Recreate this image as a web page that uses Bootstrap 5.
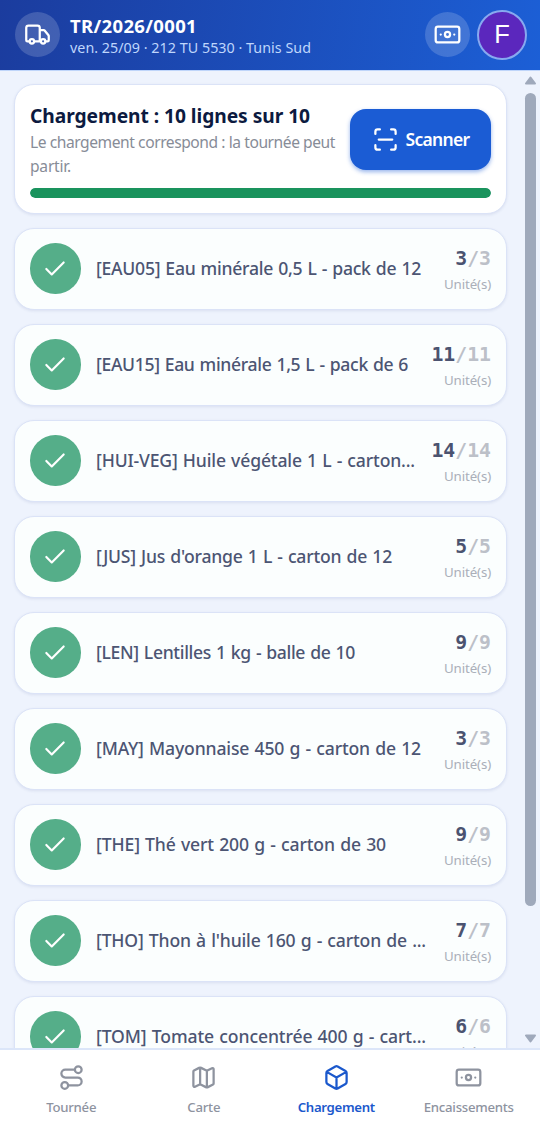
<!DOCTYPE html>
<html lang="fr">
<head>
<meta charset="utf-8">
<meta name="viewport" content="width=device-width, initial-scale=1">
<title>Chargement</title>
<link href="https://cdn.jsdelivr.net/npm/bootstrap@5.3.0/dist/css/bootstrap.min.css" rel="stylesheet">
<style>
body{font-family:"Noto Sans","Open Sans",sans-serif;background:#eef3fd;height:1130px;overflow:hidden;color:#0c1a40}
svg{display:block;fill:none;stroke:currentColor;stroke-width:2;stroke-linecap:round;stroke-linejoin:round}
.topbar{height:71px;padding:0 13px 1px 15px;background:linear-gradient(100deg,#1b3c9e,#1c5fd6);border-bottom:1px solid #bfd5fa}
.round-btn{width:45px;height:45px;background:rgba(255,255,255,.17)}
.avatar{width:50px;height:50px;background:#5b27bd;border:2px solid #87a9f0;font:25.5px "Liberation Sans",sans-serif;margin-left:7px}
.tour-block{margin-left:10px}
.tour-title{font-size:18.5px;font-weight:700;line-height:24px;margin-top:1px}
.tour-sub{font-size:14.3px;line-height:19px;color:#bfd6fc}
.content-col{padding:13px 0 0 14px;width:507px;gap:14px}
.panel{background:#fff;border:1px solid #dbe3f7;border-radius:20px;box-shadow:0 1px 3px rgba(40,60,130,.1);flex:none}
.summary{height:130px;padding:15px 15px 15px}
.sum-title{font-size:19.2px;font-weight:700;line-height:28px;color:#0c1a40;margin-top:2px}
.sum-text{font-size:15.6px;line-height:24px;color:#878c97}
.scan-btn{width:141px;height:61px;border-radius:16px;background:#1b5cd4;color:#fff;font-size:17.5px;font-weight:600;box-shadow:0 2px 4px rgba(27,92,212,.45);gap:7px;margin-top:9px}
.load-bar{height:10px;border-radius:5px;background:#e4eaf5;margin-top:auto;--bs-progress-bar-bg:#1a935d}
.load-bar .progress-bar{border-radius:5px}
.line-item{height:82px;padding:0 15px 1px;background:#fbfefe}
.tick{width:50.5px;height:50.5px;background:#55ae89;color:#fff;flex:none}
.item-name{font-size:17.6px;font-weight:500;line-height:26px;color:#4c5573;margin:-2px 0 0 15.5px;word-spacing:.8px;flex:1;min-width:0}
.qty{font-family:"DejaVu Sans Mono",monospace;font-size:19.8px;font-weight:700;line-height:25px;color:#4b5370;margin-top:3px}
.qty span{color:#bcc0c8}
.unit{font-size:13.3px;line-height:22px;color:#aaafb9;margin-top:2px}
.scroll-col{width:11px;margin-left:18px;padding:5px 0;color:#9fa9bb}
.thumb{height:813px;border-radius:6px;background:#9fa9bb;margin-top:8px}
.tabs{height:82px;background:#fff;border-top:2px solid #dce6f9;padding:0 5px}
.tab-item{color:#8e939f;font-size:13.2px;font-weight:500;line-height:18px;padding-top:13.5px;gap:7px;white-space:nowrap}
.tab-item.current{color:#1b58cc;font-weight:600}
</style>
</head>
<body class="d-flex flex-column">
<svg class="d-none"><defs>
<symbol id="cash" viewBox="0 0 24 24"><rect x="1.500" y="5" width="21" height="14" rx="2"/><circle cx="12" cy="12" r="2.300"/><path d="M6 12h.01M18 12h.01"/></symbol>
<symbol id="check" viewBox="0 0 24 24"><path d="M20 6 9 17l-5-5"/></symbol>
</defs></svg>
<header class="topbar d-flex align-items-center text-white flex-shrink-0">
<div class="round-btn rounded-circle d-flex align-items-center justify-content-center"><svg width="27" height="27" viewBox="0 0 24 24"><path d="M14 18V6a2 2 0 0 0-2-2H4a2 2 0 0 0-2 2v11a1 1 0 0 0 1 1h2M15 18H9M19 18h2a1 1 0 0 0 1-1v-3.650a1 1 0 0 0-.22-.624l-3.480-4.350A1 1 0 0 0 17.520 8H14"/><circle cx="7" cy="18" r="2"/><circle cx="17" cy="18" r="2"/></svg></div>
<div class="tour-block flex-grow-1"><div class="tour-title"><span class="fit" data-w="127">TR/2026/0001</span></div><div class="tour-sub"><span class="fit" data-w="241">ven. 25/09 · 212 TU 5530 · Tunis Sud</span></div></div>
<div class="round-btn rounded-circle d-flex align-items-center justify-content-center"><svg width="27" height="27"><use href="#cash"/></svg></div>
<div class="avatar rounded-circle d-flex align-items-center justify-content-center">F</div>
</header>
<main class="d-flex flex-grow-1 overflow-hidden">
<div class="content-col d-flex flex-column" id="lines">
<section class="panel summary d-flex flex-column">
<div class="d-flex justify-content-between">
<div><div class="sum-title"><span class="fit" data-w="280">Chargement : 10 lignes sur 10</span></div><div class="sum-text"><span class="fit" data-w="305">Le chargement correspond : la tournée peut</span><br><span class="fit" data-w="41">partir.</span></div></div>
<button class="scan-btn btn border-0 p-0 d-flex align-items-center justify-content-center flex-shrink-0"><svg width="27" height="27" viewBox="0 0 24 24"><path d="M3 7V5a2 2 0 0 1 2-2h2M17 3h2a2 2 0 0 1 2 2v2M21 17v2a2 2 0 0 1-2 2h-2M7 21H5a2 2 0 0 1-2-2v-2M6 12h12"/></svg><span class="fit" data-w="64">Scanner</span></button>
</div>
<div class="progress load-bar"><div class="progress-bar w-100"></div></div>
</section>
</div>
<div class="scroll-col d-flex flex-column">
<svg width="11" height="9" viewBox="0 0 11 9"><path d="M5.500 1.500 1 7.500h9z" fill="currentColor"/></svg>
<div class="thumb"></div>
<svg class="mt-auto" width="11" height="9" viewBox="0 0 11 9"><path d="M5.500 7.500 1 1.500h9z" fill="currentColor"/></svg>
</div>
</main>
<nav class="tabs d-flex flex-shrink-0">
<div class="tab-item col-3 d-flex flex-column align-items-center"><svg width="27" height="27" viewBox="0 0 24 24"><circle cx="6" cy="19" r="3"/><path d="M9 19h8.500a3.500 3.500 0 0 0 0-7h-11a3.500 3.500 0 0 1 0-7H15"/><circle cx="18" cy="5" r="3"/></svg><span class="fit" data-w="50">Tournée</span></div>
<div class="tab-item col-3 d-flex flex-column align-items-center"><svg width="27" height="27" viewBox="0 0 24 24"><path d="M14.106 5.553a2 2 0 0 0 1.788 0l3.659-1.830A1 1 0 0 1 21 4.619v12.764a1 1 0 0 1-.553.894l-4.553 2.277a2 2 0 0 1-1.788 0l-4.212-2.106a2 2 0 0 0-1.788 0l-3.659 1.830A1 1 0 0 1 3 19.381V6.618a1 1 0 0 1 .553-.894l4.553-2.277a2 2 0 0 1 1.788 0zM15 5.764v15M9 3.236v15"/></svg><span class="fit" data-w="33">Carte</span></div>
<div class="tab-item current col-3 d-flex flex-column align-items-center"><svg width="27" height="27" viewBox="0 0 24 24"><path d="M21 8a2 2 0 0 0-1-1.730l-7-4a2 2 0 0 0-2 0l-7 4A2 2 0 0 0 3 8v8a2 2 0 0 0 1 1.730l7 4a2 2 0 0 0 2 0l7-4A2 2 0 0 0 21 16ZM3.300 7 12 12l8.700-5M12 22V12"/></svg><span class="fit" data-w="77">Chargement</span></div>
<div class="tab-item col-3 d-flex flex-column align-items-center"><svg width="27" height="27"><use href="#cash"/></svg><span class="fit" data-w="90">Encaissements</span></div>
</nav>
<script src="https://cdn.jsdelivr.net/npm/bootstrap@5.3.0/dist/js/bootstrap.bundle.min.js"></script>
<script>
const items=[
["[EAU05] Eau minérale 0,5 L - pack de 12",3,325],
["[EAU15] Eau minérale 1,5 L - pack de 6",11,312],
["[HUI-VEG] Huile végétale 1 L - carton...",14,319],
["[JUS] Jus d'orange 1 L - carton de 12",5,296],
["[LEN] Lentilles 1 kg - balle de 10",9,259],
["[MAY] Mayonnaise 450 g - carton de 12",3,325],
["[THE] Thé vert 200 g - carton de 30",9,290],
["[THO] Thon à l'huile 160 g - carton de ...",7,330],
["[TOM] Tomate concentrée 400 g - cart...",6,330]];
document.getElementById("lines").insertAdjacentHTML("beforeend",items.map(([name,q,w])=>`
<article class="panel line-item d-flex align-items-center">
<div class="tick rounded-circle d-flex align-items-center justify-content-center"><svg width="26" height="26"><use href="#check"/></svg></div>
<div class="item-name text-nowrap"><span class="fit" data-w="${w}">${name}</span></div>
<div class="text-end flex-shrink-0"><div class="qty">${q}<span>/${q}</span></div><div class="unit"><span class="fit" data-w="47">Unité(s)</span></div></div>
</article>`).join(""));
document.querySelectorAll(".fit").forEach(e=>{
  e.style.letterSpacing="0px";e.style.whiteSpace="nowrap";
  e.style.letterSpacing=(e.dataset.w-e.getBoundingClientRect().width)/e.textContent.length+"px";
});
</script>
</body>
</html>
